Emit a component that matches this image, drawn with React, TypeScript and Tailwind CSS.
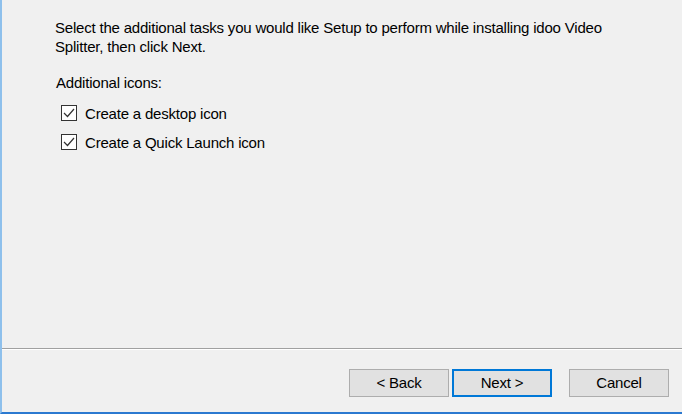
export default function App() {
  const options = ["Create a desktop icon", "Create a Quick Launch icon"]

  return (
    <div
      className="w-[682px] h-[414px] bg-[#f0f0f0] border-l-[2px] border-l-[#8ec0ec] border-b-[2px] border-b-[#2b79d0] flex flex-col text-black overflow-hidden"
      style={{ fontFamily: '"Segoe UI", "Liberation Sans", Arial, sans-serif' }}
    >
      <div className="flex-1 pl-[53px] pt-[18px]">
        <p className="max-w-[575px] text-[15px] leading-[19px] tracking-[-0.2px]">
          Select the additional tasks you would like Setup to perform while installing idoo Video
          Splitter, then click Next.
        </p>
        <p className="mt-[17px] ml-[1px] text-[15px] leading-[19px] tracking-[-0.2px]">Additional icons:</p>
        <div className="mt-[11px] ml-[6px] flex flex-col gap-[9px]">
          {options.map((label) => (
            <label key={label} className="h-[20px] flex items-center gap-[8px] text-[15px] leading-[19px] tracking-[-0.2px]">
              <span className="w-[16px] h-[16px] border border-[#333] bg-white flex items-center justify-center">
                <svg width="14" height="14" viewBox="0 0 14 14" fill="none">
                  <path d="M2 7 L5.5 10.5 L12 3" stroke="#333" strokeWidth="1.2" />
                </svg>
              </span>
              {label}
            </label>
          ))}
        </div>
      </div>
      <div className="h-px bg-[#a0a0a0]" />
      <div className="h-px bg-white" />
      <div className="h-[62px] flex justify-end items-start pt-[19px] pr-[13px]">
        <button className="w-[100px] h-[28px] bg-[#e1e1e1] border border-[#adadad] text-[15px] tracking-[-0.2px]">
          &lt; Back
        </button>
        <button className="ml-[3px] w-[100px] h-[28px] bg-[#e1e1e1] border-2 border-[#0078d7] text-[15px] tracking-[-0.2px]">
          Next &gt;
        </button>
        <button className="ml-[17px] w-[100px] h-[28px] bg-[#e1e1e1] border border-[#adadad] text-[15px] tracking-[-0.2px]">
          Cancel
        </button>
      </div>
    </div>
  )
}
